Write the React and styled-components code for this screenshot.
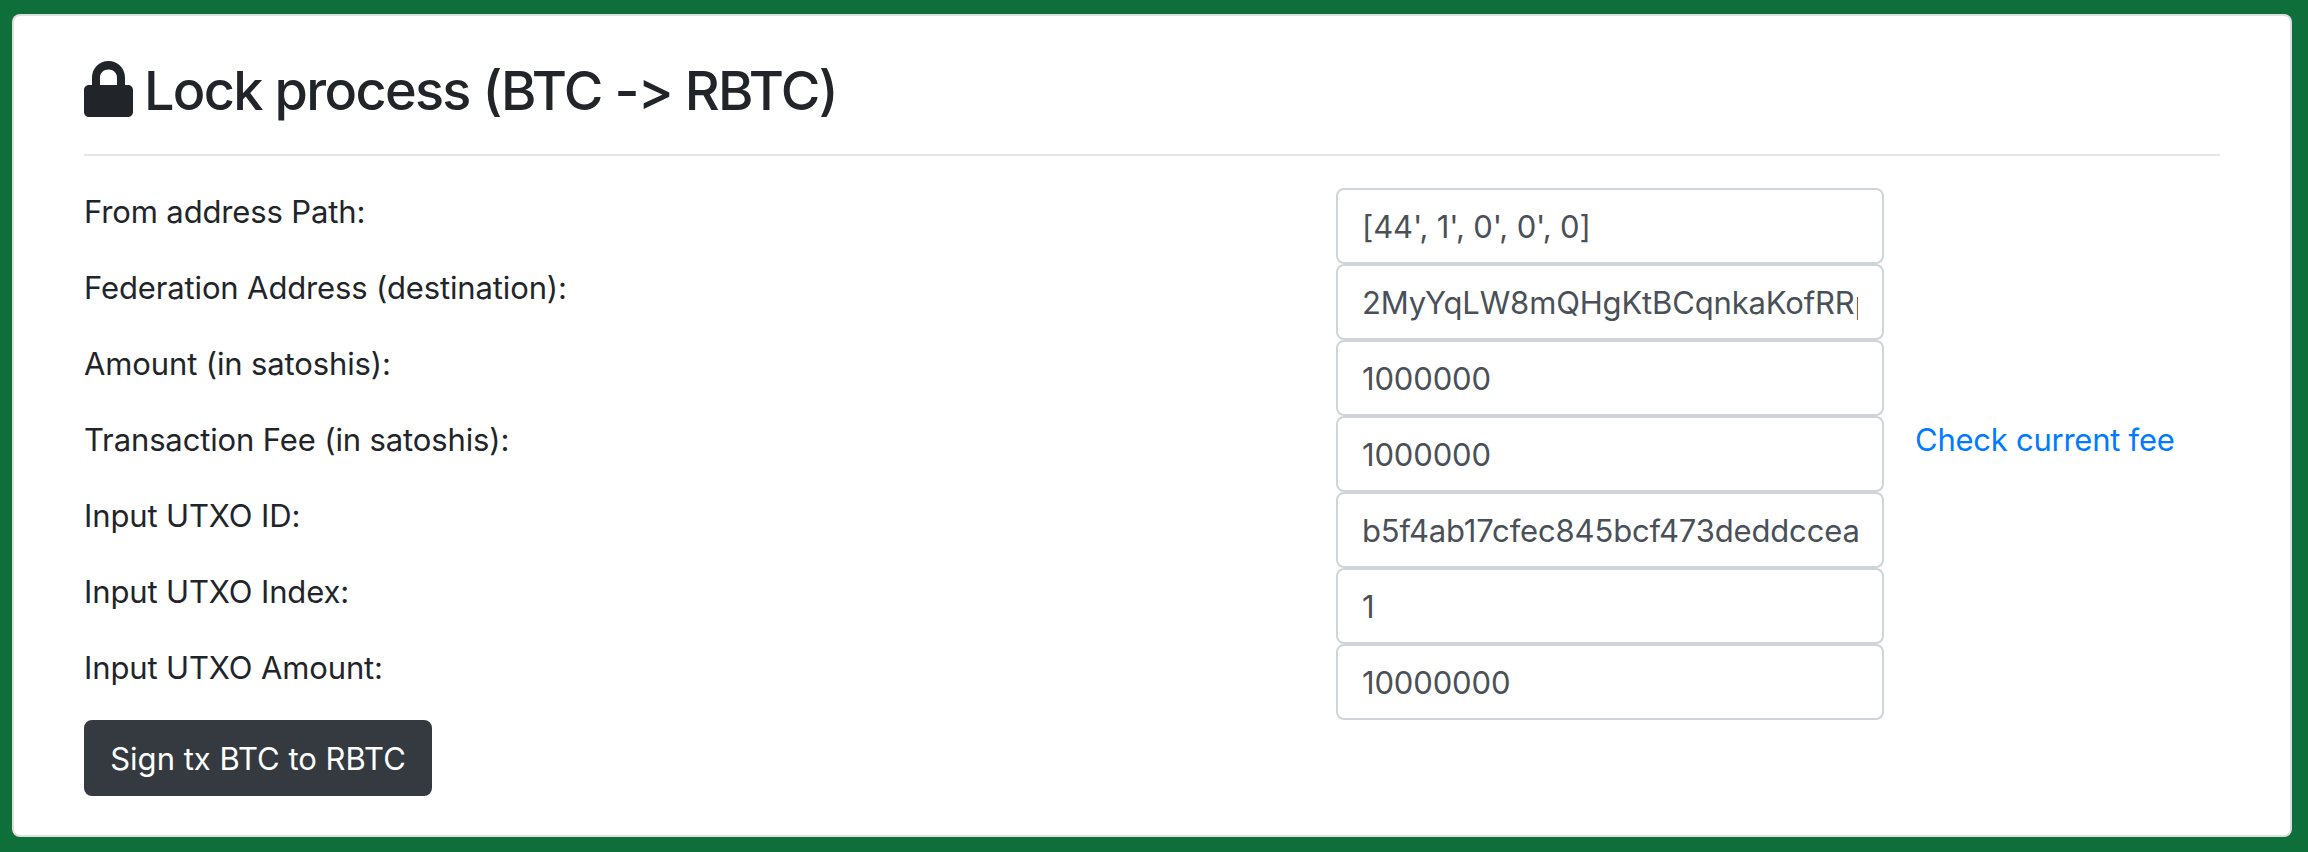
import React from "react";
import styled, { createGlobalStyle } from "styled-components";

const Global = createGlobalStyle`
  html, body { margin: 0; padding: 0; }
  body { font-family: Inter, "Liberation Sans", sans-serif; background: #0f6f3a; }
  * { box-sizing: border-box; }
`;

const Page = styled.div`
  width: 2308px;
  height: 852px;
  padding: 14px 16px 15px 12px;
  background: #0f6f3a;
`;

const Card = styled.section`
  height: 823px;
  background: #fff;
  border: 2px solid rgba(0, 0, 0, 0.125);
  border-radius: 8px;
  padding: 40px 70px 40px 70px;
`;

const Title = styled.h3`
  display: flex;
  align-items: flex-start;
  gap: 11px;
  margin: 0;
  height: 98px;
  padding-top: 3px;
  font-size: 54px;
  line-height: 63px;
  font-weight: 500;
  color: #212529;
  letter-spacing: -1.67px;
`;

const LockIcon = styled.svg`
  width: 49px;
  height: 56px;
  flex: none;
  margin-top: 2px;
  fill: #212529;
`;

const Divider = styled.hr`
  margin: 0 0 32px;
  border: 0;
  border-top: 2px solid rgba(0, 0, 0, 0.1);
`;

const Form = styled.div`
  display: grid;
  grid-template-columns: 1252px 548px 1fr;
  grid-auto-rows: 76px;
`;

const Label = styled.label`
  grid-column: 1;
  padding-top: 2px;
  font-size: 31px;
  line-height: 44px;
  color: #212529;
  letter-spacing: -0.13px;
`;

const Input = styled.input`
  grid-column: 2;
  width: 548px;
  height: 76px;
  padding: 1px 24px 0;
  border: 2px solid #ced4da;
  border-radius: 8px;
  background: #fff;
  color: #495057;
  font: 400 31px Inter, "Liberation Sans", sans-serif;
  letter-spacing: -0.15px;
  outline: none;
`;

const FeeLink = styled.a`
  grid-column: 3;
  align-self: start;
  padding-top: 2px;
  margin-left: 31px;
  color: #007bff;
  font-size: 31px;
  line-height: 44px;
  letter-spacing: -0.25px;
  text-decoration: none;
`;

const SignButton = styled.button`
  display: block;
  width: 348px;
  height: 76px;
  padding: 0;
  border: 2px solid #343a40;
  border-radius: 8px;
  background: #343a40;
  color: #fff;
  font: 400 31px Inter, "Liberation Sans", sans-serif;
`;

const fields = [
  { label: "From address Path:", value: "[44', 1', 0', 0', 0]" },
  { label: "Federation Address (destination):", value: "2MyYqLW8mQHgKtBCqnkaKofRRpnmAAVSSk" },
  { label: "Amount (in satoshis):", value: "1000000" },
  { label: "Transaction Fee (in satoshis):", value: "1000000", link: "Check current fee" },
  { label: "Input UTXO ID:", value: "b5f4ab17cfec845bcf473deddccea1d0a2f4" },
  { label: "Input UTXO Index:", value: "1" },
  { label: "Input UTXO Amount:", value: "10000000" },
];

export default function App() {
  return (
    <>
      <Global />
      <Page>
        <Card>
          <Title>
            <LockIcon viewBox="0 0 49 56" aria-hidden="true">
              <path
                fillRule="evenodd"
                d="M8 24V16.5C8 7.4 15.4 0 24.500 0S41 7.400 41 16.500V24h3c2.800 0 5 2.200 5 5v22c0 2.800-2.200 5-5 5H5c-2.800 0-5-2.200-5-5V29c0-2.800 2.200-5 5-5h3zM16 24h17V16.500C33 11.800 29.200 8.500 24.500 8.500S16 11.800 16 16.500V24z"
              />
            </LockIcon>
            Lock process (BTC -&gt; RBTC)
          </Title>
          <Divider />
          <Form>
            {fields.map((f) => (
              <React.Fragment key={f.label}>
                <Label>{f.label}</Label>
                <Input readOnly defaultValue={f.value} />
                {f.link ? <FeeLink href="#">{f.link}</FeeLink> : <span />}
              </React.Fragment>
            ))}
          </Form>
          <SignButton type="button">Sign tx BTC to RBTC</SignButton>
        </Card>
      </Page>
    </>
  );
}
